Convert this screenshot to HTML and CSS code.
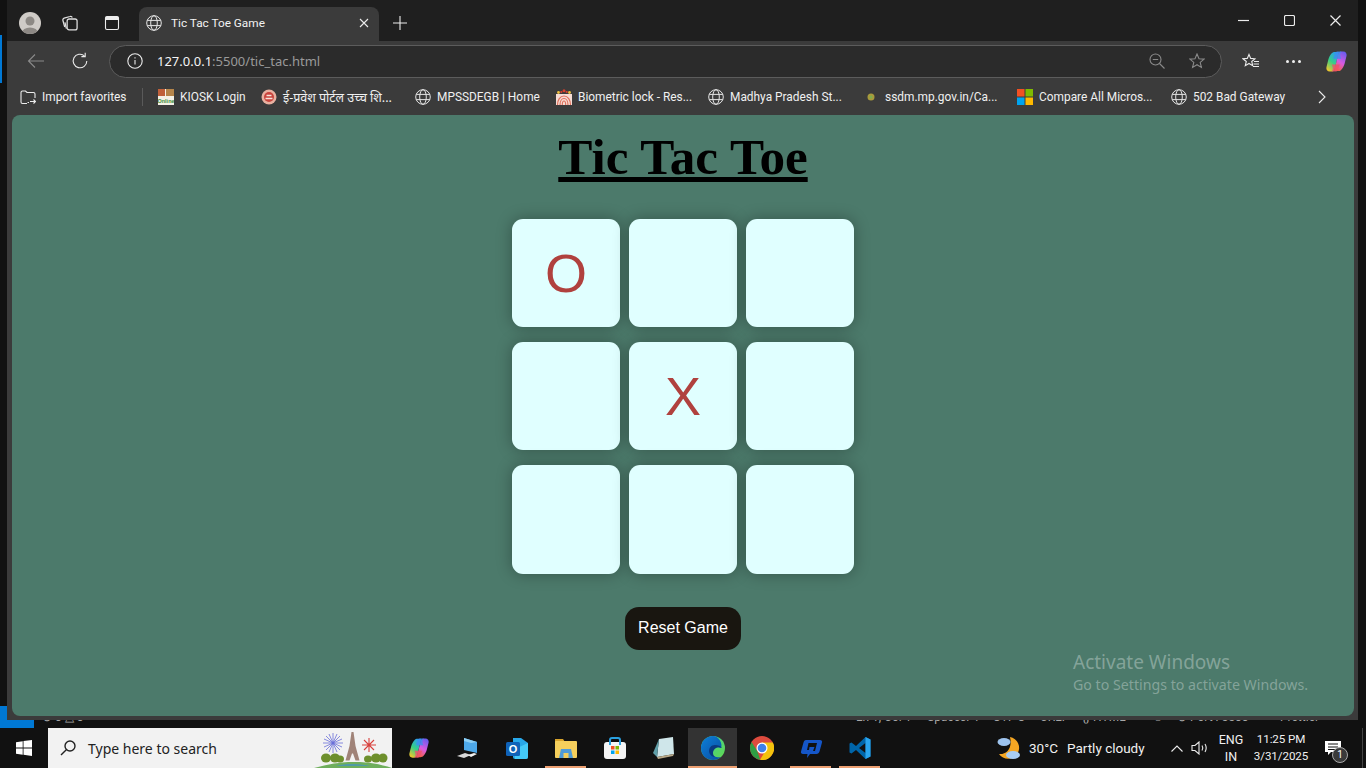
FILE: index.html
```html
<!DOCTYPE html>
<html lang="en">
<head>
<meta charset="utf-8">
<title>Tic Tac Toe Game</title>
<link rel="stylesheet" href="styles.css">
</head>
<body>
<svg class="sprite" width="0" height="0" aria-hidden="true">
  <defs>
    <linearGradient id="cpA" x1="0.7" y1="0" x2="0.2" y2="1"><stop offset="0" stop-color="#2a9df0"/><stop offset=".5" stop-color="#35cf86"/><stop offset="1" stop-color="#f6c72a"/></linearGradient>
    <linearGradient id="cpB" x1="0.7" y1="0" x2="0.3" y2="1"><stop offset="0" stop-color="#6a5cf0"/><stop offset=".55" stop-color="#d95ae0"/><stop offset="1" stop-color="#f4603f"/></linearGradient>
    <linearGradient id="edA" x1="0" y1="0" x2="1" y2="1"><stop offset="0" stop-color="#3fd0a0"/><stop offset="1" stop-color="#62d84c"/></linearGradient>
    <linearGradient id="edB" x1="0" y1="0" x2="1" y2="1"><stop offset="0" stop-color="#0c7fd8"/><stop offset="1" stop-color="#0a4ea0"/></linearGradient>
    <symbol id="globe" viewBox="0 0 16 16"><g fill="none" stroke="currentColor" stroke-width="1"><circle cx="8" cy="8" r="7.300"/><ellipse cx="8" cy="8" rx="3.300" ry="7.300"/><path d="M1.200 5.400h13.600M1.200 10.600h13.600"/></g></symbol>
    <symbol id="copilot" viewBox="0 0 24 24">
      <path fill="url(#cpA)" d="M7 3.500C8 2.300 9 2 10.500 2h4L10 20c-.6 2-2 2.500-3.500 2.500H5C2.500 22.500 1 20.500 1.500 18L3.500 10C4.200 7.500 5.500 5 7 3.500z"/>
      <path fill="url(#cpB)" d="M17 20.500c-1 1.200-2 1.500-3.500 1.500h-4L14 4c.6-2 2-2.500 3.500-2.500H19c2.500 0 4 2 3.500 4.500L20.500 14c-.7 2.500-2 5-3.500 6.500z"/>
      <path fill="#f0506a" d="M7 15h8.500l-2 5.500c-.5 1.300-1.500 2-3 2H6.500c1.800-.6 2.300-4.500.5-7.500z" opacity=".8"/>
      <path fill="#3f8cf0" d="M17 9H8.500l2-5.500c.5-1.300 1.500-2 3-2h4c-1.800.6-2.300 4.500-.5 7.500z" opacity=".8"/>
    </symbol>
  </defs>
</svg>

<div class="desktop">
  <i class="side-accent"></i>
  <div class="statusbar">
    <div class="remote">&#8250;</div>
    <div class="status-left">&#8857; 0 &#9651; 0</div>
    <div class="status-right">
      <span>Ln 1, Col 1</span><span>Spaces: 4</span><span>UTF-8</span><span>CRLF</span><span>{} HTML</span><span>&#9786;</span><span>&#8857; Port : 5500</span><span>&#10003; Prettier</span><span>&#9900;</span>
    </div>
  </div>

  <section class="window">
    <div class="tabstrip">
      <div class="profile">
        <svg viewBox="0 0 22 22" class="ico22"><defs><clipPath id="pc"><circle cx="11" cy="11" r="11"/></clipPath></defs><circle cx="11" cy="11" r="11" fill="#cfcbc7"/><g clip-path="url(#pc)" fill="#8d8985"><circle cx="11" cy="9" r="4.500"/><ellipse cx="11" cy="21" rx="8" ry="5.500"/></g></svg>
      </div>
      <div class="tool-a">
        <svg viewBox="1 1 14 14" class="ico16 line"><path d="M5.500 6.200a1.700 1.700 0 0 1 1.700-1.700h5.300a1.700 1.700 0 0 1 1.700 1.700v6.100a1.700 1.700 0 0 1-1.700 1.700H7.200a1.700 1.700 0 0 1-1.700-1.700z"/><path d="M3.400 11.500 1.800 5.800a1.600 1.600 0 0 1 1.100-2l5.100-1.500a1.600 1.600 0 0 1 2 .9"/><path d="M4.800 13 3.600 7.500"/></svg>
      </div>
      <div class="tool-b">
        <svg viewBox="0 0 16 16" class="ico16 line-strong"><rect x="1.500" y="1.500" width="13" height="13" rx="1.500"/><path class="solid" d="M1.500 3a1.500 1.500 0 0 1 1.500-1.500h10A1.500 1.500 0 0 1 14.500 3v2h-13z"/></svg>
      </div>
      <div class="tab">
        <svg class="ico16 glyph"><use href="#globe"/></svg>
        <span class="tab-title">Tic Tac Toe Game</span>
        <svg viewBox="0 0 10 10" class="ico10 line-strong"><path d="m1 1 8 8M9 1l-8 8"/></svg>
      </div>
      <div class="newtab"><svg viewBox="0 0 14 14" class="ico14 line-strong"><path d="M7 0v14M0 7h14"/></svg></div>
      <div class="caption">
        <svg viewBox="0 0 11 11" class="ico11 line-strong"><path d="M0 5.500h11"/></svg>
        <svg viewBox="0 0 11 11" class="ico11 line-strong"><rect x=".5" y=".5" width="10" height="10" rx="1.500"/></svg>
        <svg viewBox="0 0 11 11" class="ico11 line-strong"><path d="m.5.500 10 10M10.500.500l-10 10"/></svg>
      </div>
    </div>

    <div class="toolbar">
      <svg viewBox="0 0 18 16" class="back line-dim"><path d="M17 8H1.500M8 1.500 1.500 8 8 14.500"/></svg>
      <svg viewBox="0 0 18 18" class="reload line-strong"><path d="M15.800 9a6.800 6.800 0 1 1-2.300-5.100"/><path d="M14.200 0.800v3.800h-3.800"/></svg>
      <div class="omnibox">
        <svg viewBox="0 0 16 16" class="ico16 line-strong info"><circle cx="8" cy="8" r="7.200"/><path d="M8 7v4.500"/><path d="M8 4.200v1.300"/></svg>
        <span class="url"><b>127.0.0.1</b>:5500/tic_tac.html</span>
        <svg viewBox="0 0 16 16" class="ico16 line-dim zoomout"><circle cx="6.500" cy="6.500" r="5.500"/><path d="M3.800 6.500h5.400M10.500 10.500l5 5"/></svg>
        <svg viewBox="0 0 16 16" class="ico16 line-dim star"><path d="m8 1 2 4.700 5.100.4-3.900 3.300 1.200 5L8 11.700l-4.400 2.700 1.200-5L.9 6.100 6 5.700z"/></svg>
      </div>
      <svg viewBox="0 0 18 16" class="favs line-strong"><path d="m7 1.500 1.700 3.900 4.200.4-3.200 2.700 1 4.200L7 10.500l-3.700 2.200 1-4.200L1 5.800l4.300-.4z"/><path d="M12 8.500h5M11.500 11h5.500M11 13.500h6"/></svg>
      <div class="dots"><i></i><i></i><i></i></div>
      <svg class="copilot-top"><use href="#copilot"/></svg>
    </div>

    <div class="bookmarks">
      <div class="bm"><svg viewBox="0 0 16 16" class="ico16 line-strong"><path d="M7 14.500H2.500a1.500 1.500 0 0 1-1.500-1.500V3.500A1.500 1.500 0 0 1 2.500 2h3l1.500 1.500h6.500A1.500 1.500 0 0 1 15 5v4"/><path d="M10 12.500h5.500M13.500 10.500l2 2-2 2M9 13.500l-1.500 0"/></svg><span>Import favorites</span></div>
      <i class="bm-sep"></i>
      <div class="bm"><svg viewBox="0 0 16 16" class="ico16"><rect width="16" height="16" fill="#f4f1e6"/><rect width="7" height="7" fill="#c0603a"/><rect x="8" width="8" height="7" fill="#b5854a"/><text x="8" y="13.500" class="kiosk-t">Online</text></svg><span>KIOSK Login</span></div>
      <div class="bm"><svg viewBox="0 0 16 16" class="ico16"><circle cx="8" cy="8" r="7.500" fill="#e8b0a0"/><circle cx="8" cy="8" r="5" fill="#c8433c"/><path d="M4.500 9.500h7M5.500 6.500h5" stroke="#f6e2d8" stroke-width="1.500"/></svg><span class="hindi">ई-प्रवेश पोर्टल उच्च शि...</span></div>
      <div class="bm"><svg class="ico16 glyph"><use href="#globe"/></svg><span>MPSSDEGB | Home</span></div>
      <div class="bm"><svg viewBox="0 0 16 16" class="ico16"><rect y="5" width="16" height="11" fill="#f6dcd4"/><g fill="none" stroke="#e0705c" stroke-width="1.200"><path d="M1.500 16c0-5 2.500-9 6.500-9s6.500 4 6.500 9"/><path d="M4 16c0-3.500 1.500-6.500 4-6.500s4 3 4 6.500"/><path d="M6.300 16c0-2 .5-4 1.700-4s1.700 2 1.700 4"/></g><g fill="#f0c040"><circle cx="2.500" cy="3.500" r="1.400"/><circle cx="13.500" cy="3.500" r="1.400"/></g><g fill="#d8402c"><circle cx="8" cy="1.800" r="1.500"/><circle cx="5.300" cy="3" r="1.100"/><circle cx="10.700" cy="3" r="1.100"/></g></svg><span>Biometric lock - Res...</span></div>
      <div class="bm"><svg class="ico16 glyph"><use href="#globe"/></svg><span>Madhya Pradesh St...</span></div>
      <div class="bm"><svg viewBox="0 0 16 16" class="ico16"><circle cx="8" cy="8" r="3.500" fill="#a89a3c"/><circle cx="8" cy="8" r="1.500" fill="#7fae4c"/></svg><span>ssdm.mp.gov.in/Ca...</span></div>
      <div class="bm"><svg viewBox="0 0 16 16" class="ico16"><rect width="7.500" height="7.500" fill="#f25022"/><rect x="8.500" width="7.500" height="7.500" fill="#7fba00"/><rect y="8.500" width="7.500" height="7.500" fill="#00a4ef"/><rect x="8.500" y="8.500" width="7.500" height="7.500" fill="#ffb900"/></svg><span>Compare All Micros...</span></div>
      <div class="bm"><svg class="ico16 glyph"><use href="#globe"/></svg><span>502 Bad Gateway</span></div>
      <svg viewBox="0 0 8 14" class="bm-more line-strong"><path d="m1 1 6 6-6 6"/></svg>
    </div>

    <main class="page">
      <h1 class="title">Tic Tac Toe</h1>
      <div class="board">
        <button class="cell">O</button><button class="cell"></button><button class="cell"></button>
        <button class="cell"></button><button class="cell">X</button><button class="cell"></button>
        <button class="cell"></button><button class="cell"></button><button class="cell"></button>
      </div>
      <button class="reset">Reset Game</button>
      <div class="activate">
        <div class="activate-a">Activate Windows</div>
        <div class="activate-b">Go to Settings to activate Windows.</div>
      </div>
    </main>
  </section>
</div>

<footer class="taskbar">
  <div class="start"><svg viewBox="0 0 16 16" class="ico16"><path fill="#fff" d="M0 2.200 6.700 1.200v6.400H0zM7.500 1.100 16 0v7.600H7.500zM0 8.400h6.700v6.400L0 13.800zM7.500 8.400H16V16l-8.500-1.200z"/></svg></div>
  <div class="search">
    <svg viewBox="0 0 16 16" class="ico16 line-dark"><circle cx="10" cy="6" r="5"/><path d="m6.300 9.700-5.300 5.300" /></svg>
    <span>Type here to search</span>
    <svg viewBox="0 0 78 40" class="search-art">
      <path d="M0 40c14-4 26-6 40-6s26 2 38 6z" fill="#6fae5c"/>
      <path d="M22 38c8-2 12-2 18-2s12 1 16 2z" fill="#4f9aa8"/>
      <g fill="#6d8f2c"><ellipse cx="12" cy="30" rx="5" ry="4.500"/><ellipse cx="21" cy="30" rx="5" ry="4.500"/><ellipse cx="26" cy="31" rx="4" ry="3.500"/><ellipse cx="54" cy="31" rx="4" ry="3.500"/><ellipse cx="62" cy="30" rx="5" ry="4.500"/><ellipse cx="69" cy="30" rx="4.500" ry="4.500"/></g>
      <path d="M37.500 4h2l2 14 4 14.500h-4l-2.500-7h-1l-2.500 7h-4l4-14.500z" fill="#a08378"/>
      <g stroke="#6a6fd8" stroke-width=".8"><path d="M19 5v20M9 15h20M12 8l14 14M26 8 12 22M15 6l8 18M23 6 15 24M10 11l18 8M28 11 10 19"/></g>
      <g stroke="#d8403c" stroke-width="1.100"><path d="M55 10v14M48 17h14M50 12l10 10M60 12 50 22"/></g>
    </svg>
  </div>
  <div class="apps">
    <div class="app"><svg class="ico22"><use href="#copilot"/></svg></div>
    <div class="app"><svg viewBox="0 0 24 24" class="ico24"><path fill="#4ea9ea" d="M8 2l13 4v11L8 14z"/><path fill="#8fd0f5" d="M8 2l13 4-6 1-7-2z"/><path fill="#d8d8d8" d="M1 20l8-3 6 2-7 3z"/><path fill="#f0f0f0" d="M12 19l6-2 3 1-6 3z"/></svg></div>
    <div class="app"><svg viewBox="0 0 24 24" class="ico24"><path fill="#28a8ea" d="M8 2h8l7 5v14a2 2 0 0 1-2 2H10a2 2 0 0 1-2-2z"/><path fill="#50d9ff" d="M10 13l13-6v14a2 2 0 0 1-2 2H10z" opacity=".7"/><rect x="1" y="6" width="14" height="14" rx="1.500" fill="#0f62b8"/><text x="8" y="17" class="outlook-o">O</text></svg></div>
    <div class="app"><svg viewBox="0 0 24 24" class="ico24"><path fill="#d8a42c" d="M1 3h8l2 3h-10z"/><rect x="1" y="5" width="22" height="17" rx="1" fill="#f5cf5c"/><path fill="#4f9bd8" d="M7 13h10l2 9H5z"/><rect x="9.500" y="17" width="5" height="5" fill="#f5cf5c"/></svg></div>
    <div class="app"><svg viewBox="0 0 24 24" class="ico24"><rect x="1" y="6" width="22" height="17" rx="3" fill="#f4f4f4"/><path d="M7 9V4a2 2 0 0 1 2-2h6a2 2 0 0 1 2 2v5" fill="none" stroke="#2aa0e0" stroke-width="2"/><rect x="8" y="10" width="3.500" height="3.500" fill="#f25022"/><rect x="12.500" y="10" width="3.500" height="3.500" fill="#7fba00"/><rect x="8" y="14.500" width="3.500" height="3.500" fill="#00a4ef"/><rect x="12.500" y="14.500" width="3.500" height="3.500" fill="#ffb900"/></svg></div>
    <div class="app"><svg viewBox="0 0 24 24" class="ico24"><path fill="#cfe6ea" d="M7 3l14-2 1 17-17 3z"/><path fill="#5f9ea8" d="M7 3 1 17l4 4z"/><path fill="#b8a888" d="m5 21 17-3-1 2-15 3z"/></svg></div>
    <div class="app app-on"><svg viewBox="0 0 24 24" class="ico24"><circle cx="12" cy="12" r="12" fill="url(#edA)"/><path fill="url(#edB)" d="M12 0A12 12 0 0 0 0 12c0 7 5 12 12 12 3 0 6-1 8-3-3 1-8 0-9-4-1-3 1-6 4-6 2 0 3 .5 5 1 2-4-2-12-8-12z"/><path fill="#0a3a80" d="M8 15c0-3 2-6 6-6 3 0 6 1 7 3-2-1-4-1-6 0s-3 3-3 5c0 2 1 3 2 4-3 0-6-3-6-6z"/></svg></div>
    <div class="app"><svg viewBox="0 0 24 24" class="ico24"><circle cx="12" cy="12" r="12" fill="#dd4b3e"/><path fill="#f4c20d" d="M12 6.500h10.800A12 12 0 0 1 10 23.800l5.500-9z"/><path fill="#2f9e44" d="M1.600 6 7.200 15l3 8.800A12 12 0 0 1 1.600 6z"/><circle cx="12" cy="12" r="5.500" fill="#fff"/><circle cx="12" cy="12" r="4.300" fill="#3f80ea"/></svg></div>
    <div class="app"><svg viewBox="0 0 24 24" class="ico24"><path fill="#1556c8" d="M7 4h14c1.500 0 2.500 1 2 2.500l-2.500 9c-.5 1.500-1.500 2.500-3 2.500H11l-3 4 .5-4H4c-1.500 0-2.500-1-2-2.500L4.500 6.500C5 5 5.500 4 7 4zm2.500 3L8 14h2l.5-3h5l-1.500 4h2l2-8z" fill-rule="evenodd"/></svg></div>
    <div class="app"><svg viewBox="0 0 24 24" class="ico24"><path fill="#0065a9" d="M17.500 1 8 10 3.500 6.500 1.500 7.500v9l2 1L8 14l9.500 9 5-2.500V3.500zM17.500 7v10L11 12z" fill-rule="evenodd"/><path fill="#2aa5ee" d="M17.500 1l5 2.500v17L17.500 23z"/></svg></div>
  </div>
  <div class="tray">
    <svg viewBox="0 0 26 26" class="weather"><path fill="#f5a623" d="M14 2a11 11 0 1 1-11 17c6 1 14-4 11-17z"/><ellipse cx="8" cy="7" rx="6.500" ry="4" fill="#9ec4ee"/><ellipse cx="17" cy="20" rx="7" ry="4" fill="#a8ccf2"/></svg>
    <span class="temp">30°C</span>
    <span class="sky">Partly cloudy</span>
    <svg viewBox="0 0 12 7" class="tray-up line-strong"><path d="m.5 6.500 5.500-5.500 5.500 5.500"/></svg>
    <svg viewBox="0 0 18 14" class="tray-vol line-strong"><path d="M1 4.500h3L8 1v12L4 9.500H1z"/><path d="M11 4.500c1 1.500 1 3.500 0 5M14 3c1.500 2.500 1.500 5.500 0 8"/></svg>
    <div class="lang"><span>ENG</span><span>IN</span></div>
    <div class="clock"><span>11:25 PM</span><span>3/31/2025</span></div>
    <div class="notif"><svg viewBox="0 0 16 14" class="ico16"><path fill="#fff" d="M0 0h16v11H6l-3 3v-3H0z"/><path d="M3 3h10M3 6h10M3 8.500h7" stroke="#111" stroke-width="1"/></svg><span class="badge">1</span></div>
    <i class="show-desktop"></i>
  </div>
</footer>
</body>
</html>
```

FILE: styles.css
```css
* { box-sizing: border-box; }
html, body { margin: 0; padding: 0; height: 768px; overflow: hidden; }
body { background: #111; font-family: Roboto, "Noto Sans", "Liberation Sans", sans-serif; color: #f0f0f0; display: flex; flex-direction: column; }
.sprite { position: absolute; }
svg { display: block; flex: none; }
.ico10 { width: 10px; height: 10px; }
.ico11 { width: 11px; height: 11px; }
.ico14 { width: 14px; height: 14px; }
.ico16 { width: 16px; height: 16px; }
.ico22 { width: 22px; height: 22px; }
.ico24 { width: 24px; height: 24px; }
.glyph { color: #e4e4e4; }
.line, .line-strong, .line-dim, .line-dark { fill: none; stroke-width: 1.1; }
.line { stroke: #e0e0e0; }
.line-strong { stroke: #ececec; }
.line-dim { stroke: #8a8a8a; }
.line-dark { stroke: #222; stroke-width: 1.4; }
.solid { fill: #ececec; stroke: none; }

.desktop { position: relative; height: 728px; display: flex; flex-direction: column; justify-content: flex-end; }
.side-accent { position: absolute; left: 0; top: 35px; width: 2px; height: 48px; background: #0078d4; }
.statusbar { height: 22px; display: flex; align-items: center; font-size: 12px; color: #a8a8a8; }
.remote { width: 34px; height: 22px; background: #0078d4; color: #fff; padding-left: 8px; line-height: 22px; }
.status-left { margin-left: 8px; white-space: nowrap; }
.status-right { margin-left: auto; display: grid; grid-template-columns: 71px 66px 47px 42px 70px 25px 90px 77px 22px; width: 510px; white-space: nowrap; }
.window { position: absolute; left: 7px; top: 0; width: 1351px; height: 720px; background: #3b3b3b; display: flex; flex-direction: column; }

.tabstrip { height: 41px; padding-top: 5px; background: #1f1f1f; display: flex; align-items: center; flex: none; }
.profile { margin-left: 12px; width: 22px; }
.tool-a { margin-left: 21px; }
.tool-b { margin-left: 26px; }
.tab { margin-left: 19px; align-self: flex-end; width: 240px; height: 34px; padding-bottom: 2px; background: #3b3b3b; border-radius: 8px 8px 0 0; display: flex; align-items: center; padding-left: 7px; padding-right: 10px; font-size: 11.800px; color: #f2f2f2; }
.tab-title { margin-left: 9px; flex: 1; white-space: nowrap; }
.newtab { margin-left: 14px; }
.caption { margin-left: auto; margin-top: -5px; width: 138px; display: grid; grid-template-columns: repeat(3, 46px); justify-items: center; }
.caption .line-strong { stroke-width: 1.200; }

.toolbar { height: 40px; background: #3b3b3b; display: flex; align-items: center; flex: none; padding-left: 20px; }
.back { width: 18px; height: 16px; }
.reload { width: 18px; height: 18px; margin-left: 26px; }
.omnibox { margin-left: 20px; width: 1113px; height: 33px; background: #2b2b2b; border: 1px solid #5c5c5c; border-radius: 17px; display: flex; align-items: center; padding-left: 17px; }
.url { margin-left: 14px; font-family: "Noto Sans", sans-serif; font-size: 13px; color: #9a9a9a; flex: 1; white-space: nowrap; }
.url b { font-weight: 400; color: #f4f4f4; }
.zoomout { margin-right: 24px; }
.star { margin-right: 16px; }
.favs { width: 18px; height: 16px; margin-left: 20px; }
.dots { display: flex; gap: 3px; margin-left: 26px; }
.dots i { width: 3px; height: 3px; border-radius: 50%; background: #f0f0f0; }
.copilot-top { width: 23px; height: 23px; margin-left: 24px; }

.bookmarks { height: 34px; padding-bottom: 2px; display: grid; grid-template-columns: 122px 16px 103px 154px 141px 152px 155px 154px 154px 147px 8px; padding-left: 13px; align-items: center; flex: none; font-size: 11.900px; color: #f0f0f0; white-space: nowrap; }
.bm { display: flex; align-items: center; gap: 6px; min-width: 0; }
.bm-sep { width: 1px; height: 18px; background: #5a5a5a; }
.bm-more { width: 8px; height: 14px; }
.kiosk-t { font-family: "Liberation Sans", sans-serif; font-size: 5.500px; font-weight: 700; fill: #3f8f3a; text-anchor: middle; }
.hindi { font-family: "Noto Sans", "Noto Sans Devanagari", "Liberation Sans", sans-serif; font-size: 12.500px; }

.page { position: relative; flex: 1; margin: 0 4px 4px 5px; background: #4c7a6b; border-radius: 8px; display: flex; flex-direction: column; align-items: center; min-height: 0; }
.title { margin: 13px 0 33px; font-family: "Liberation Serif", serif; font-weight: 700; font-size: 51.200px; line-height: 58px; color: #000; text-decoration: underline; }
.board { display: grid; grid-template-columns: repeat(3, 108px); grid-template-rows: 108px 108px 109px; column-gap: 9px; row-gap: 15px; }
.cell { border: 0; padding: 0; background: #e0ffff; border-radius: 11px; box-shadow: 0 0 16px rgba(0, 0, 0, .3); font-family: "Liberation Sans", sans-serif; font-size: 54px; color: #b0413e; }
.reset { margin-top: 33px; width: 116px; height: 43px; padding: 0 0 2px; border: 0; border-radius: 14px; background: #191610; color: #fff; font-family: "Liberation Sans", sans-serif; font-size: 16px; }
.activate { position: absolute; left: 1061px; top: 535px; font-family: "Noto Sans", sans-serif; color: rgba(255, 255, 255, .32); white-space: nowrap; }
.activate-a { font-size: 19px; line-height: 24px; }
.activate-b { font-size: 14.200px; line-height: 22px; }

.taskbar { height: 40px; background: #111; display: flex; align-items: stretch; flex: none; }
.start { width: 48px; display: flex; align-items: center; justify-content: center; }
.search { width: 344px; background: #f2f2f2; display: flex; align-items: center; padding-left: 12px; color: #222; font-family: "Noto Sans", sans-serif; font-size: 14px; position: relative; }
.search span { margin-left: 12px; }
.search-art { position: absolute; right: 0; bottom: 0; width: 78px; height: 40px; }
.apps { display: grid; grid-template-columns: repeat(10, 49px); grid-template-rows: 40px; margin-left: 2px; }
.app { display: flex; align-items: center; justify-content: center; position: relative; }
.app-on { background: #333; }
.app:nth-child(4)::after, .app:nth-child(7)::after, .app:nth-child(9)::after, .app:nth-child(10)::after { content: ""; position: absolute; left: 4px; right: 4px; bottom: 0; height: 2px; background: #eda072; }
.app:nth-child(7)::after { left: 0; right: 0; }
.outlook-o { font-family: "Liberation Sans", sans-serif; font-size: 11px; font-weight: 700; fill: #fff; text-anchor: middle; }
.tray { flex: 1; display: flex; align-items: center; font-size: 13.500px; color: #f0f0f0; white-space: nowrap; padding-left: 112px; }
.weather { width: 26px; height: 26px; }
.temp { margin-left: 7px; width: 38px; }
.sky { width: 104px; }
.tray-up { width: 12px; height: 7px; }
.tray-vol { width: 18px; height: 14px; margin-left: 8px; }
.lang { margin-left: 7px; width: 30px; display: flex; flex-direction: column; align-items: center; font-size: 12.500px; line-height: 17px; }
.clock { width: 70px; display: flex; flex-direction: column; align-items: center; font-size: 11.600px; letter-spacing: -.1px; line-height: 17px; }
.notif { position: relative; margin-left: 9px; }
.badge { position: absolute; left: 7px; top: 7px; width: 16px; height: 16px; border-radius: 50%; background: #3a3a3a; border: 1px solid #aaa; font-size: 10px; line-height: 14px; text-align: center; color: #fff; }
.show-desktop { margin-left: 21px; width: 1px; height: 40px; background: #444; }
```
